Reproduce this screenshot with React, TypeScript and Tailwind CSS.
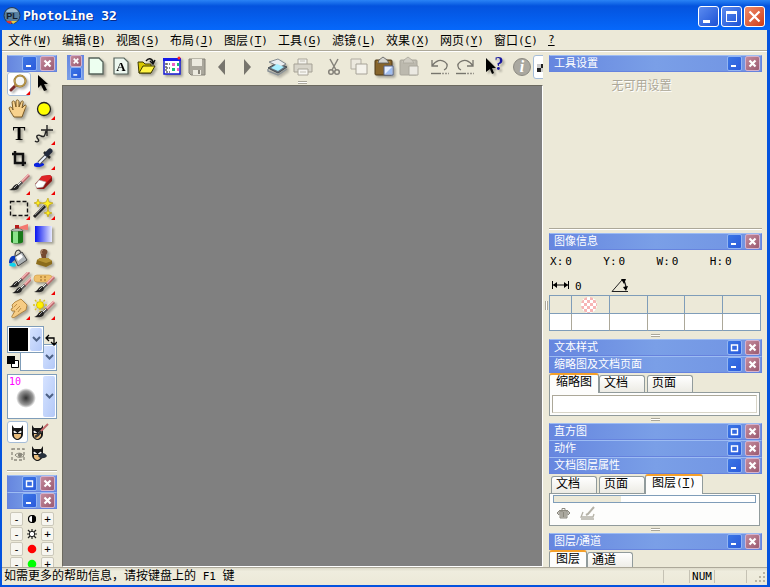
import { useState, type ReactNode } from "react";
import { clsx } from "clsx";

const menus = [
  ["文件", "W"],
  ["编辑", "B"],
  ["视图", "S"],
  ["布局", "J"],
  ["图层", "T"],
  ["工具", "G"],
  ["滤镜", "L"],
  ["效果", "X"],
  ["网页", "Y"],
  ["窗口", "C"],
];

const Latin = ({ children }: { children: ReactNode }) => (
  <span className="font-['DejaVu_Sans_Mono',monospace] text-[11px]">{children}</span>
);

const Icon = ({ children, flat }: { children: ReactNode; flat?: boolean }) => (
  <svg
    viewBox="0 0 24 24"
    aria-hidden="true"
    className={clsx("size-6 shrink-0", !flat && "drop-shadow-[2px_2px_1px_rgba(0,0,0,0.3)]")}
  >
    {children}
  </svg>
);

/* small brush reused by several tools */
const Brush = () => (
  <>
    <path d="M22 3L14 11" stroke="#b9676a" strokeWidth="3" />
    <path d="M22 2L14 10" stroke="#f5b5b5" strokeWidth="1.500" />
    <path d="M15 10L11 14" stroke="#555" strokeWidth="3" />
    <path d="M14 10L10 14" stroke="#eee" strokeWidth="1" />
    <path d="M12 14C12 18 8 19 2 18C6 17 6 13 10 12Z" fill="#222" />
    <path d="M10 13L7 16" stroke="#aaa" strokeWidth="1" />
  </>
);

const Mask = () => (
  <>
    <path d="M6 5L8 8H15L17 5V14C17 18 13 20 11.500 20C10 20 6 18 6 14Z" fill="#171717" />
    <path d="M8 14H15V16C14 18 12 19 11.500 19C10 19 8 17 8 16Z" fill="#e9bd7c" />
    <path d="M8 11L10.500 12.500H8ZM15 11L12.500 12.500H15Z" fill="#fff" stroke="#fff" strokeWidth="0.800" />
  </>
);

type Tool = { name: string; menu?: boolean; flat?: boolean; art: ReactNode };

const tools: Tool[] = [
  {
    name: "缩放",
    menu: true,
    art: (
      <>
        <path d="M9 13L4 18" stroke="#7b2b2b" strokeWidth="3" strokeLinecap="round" />
        <path d="M10 12L8 14" stroke="#d8b860" strokeWidth="2" />
        <circle cx="13" cy="9" r="5.500" fill="#f4f6f6" stroke="#8d6a22" strokeWidth="2" />
        <circle cx="13" cy="9" r="5.500" fill="none" stroke="#d9b765" strokeWidth="0.800" />
      </>
    ),
  },
  {
    name: "选择",
    art: <path d="M6 3V16L9 13L12 19L15 18L12 12H16Z" fill="#000" />,
  },
  {
    name: "移动",
    art: (
      <path
        d="M7 20C5 17 3 14 2 11C3 9 5 10 6 13L5 5C6 3 8 4 8 6L9 10L9 4C10 2 12 3 12 5V10L14 5C15 3 17 4 16 6L15 11L18 8C20 8 19 10 18 12L15 20Z"
        fill="#f8d28d"
        stroke="#7a5a25"
        strokeWidth="1"
      />
    ),
  },
  {
    name: "椭圆",
    menu: true,
    art: <circle cx="12" cy="12" r="6.500" fill="#ff0" stroke="#222" strokeWidth="1.300" />,
  },
  {
    name: "文本",
    art: (
      <text x="12" y="18" textAnchor="middle" fontSize="19" fontWeight="700" className="font-['Liberation_Serif',serif]">
        T
      </text>
    ),
  },
  {
    name: "路径",
    menu: true,
    art: (
      <path
        d="M15 3V14M9 8H21M3 19C5 21 8 19 6 17C3 14 6 12 9 14C13 16 13 12 14 9"
        fill="none"
        stroke="#222"
        strokeWidth="1.400"
      />
    ),
  },
  {
    name: "裁剪",
    art: <path d="M8 4V16H19M5 7H16V19" fill="none" stroke="#111" strokeWidth="2.500" />,
  },
  {
    name: "吸管",
    menu: true,
    art: (
      <>
        <path d="M2 17C6 14 13 16 12 18C10 20 4 21 2 19Z" fill="#0822df" />
        <path d="M15 8L7 16" stroke="#555" strokeWidth="4" />
        <path d="M15 8L7 16" stroke="#eef5ff" strokeWidth="2" />
        <path d="M12 5L18 11" stroke="#222" strokeWidth="2.500" />
        <path d="M15 7L18 4" stroke="#222a3c" strokeWidth="5" strokeLinecap="round" />
      </>
    ),
  },
  { name: "画笔", menu: true, art: <Brush /> },
  {
    name: "橡皮擦",
    menu: true,
    art: (
      <>
        <path d="M3 12L10 4L18 3L20 5V9L12 17H5Z" fill="#8e1515" />
        <path d="M7 8L10 4L18 3L20 5L14 11Z" fill="#df2527" />
        <path d="M3 13L7 8L14 10L11 15L5 16Z" fill="#fff" stroke="#aaa" strokeWidth="0.600" />
      </>
    ),
  },
  {
    name: "选框",
    menu: true,
    art: (
      <rect x="3.500" y="4.500" width="17" height="14" fill="none" stroke="#111" strokeWidth="1.400" strokeDasharray="4 2" />
    ),
  },
  {
    name: "魔棒",
    menu: true,
    art: (
      <>
        <path d="M2 20L13 9" stroke="#222" strokeWidth="3" />
        <path d="M3 18L12 9" stroke="#999" strokeWidth="0.800" />
        <path
          d="M6 2L7 5L10 6L7 7L6 10L5 7L2 6L5 5ZM16 1L17 5L21 6L17 8L16 12L14 8L10 6L14 5ZM16 12L17 15L20 16L17 17L16 20L15 17L12 16L15 15Z"
          fill="#ffee20"
          stroke="#b39600"
          strokeWidth="0.600"
        />
      </>
    ),
  },
  {
    name: "喷枪",
    art: (
      <>
        <path d="M12 5L21 2V8L12 7Z" fill="#f4786f" />
        <path d="M8 3H12V7H8Z" fill="#b71b1b" />
        <path d="M4 9C4 6 16 6 16 9V20C15 22 5 22 4 20Z" fill="#187a18" />
        <path d="M6 9H11V21H6Z" fill="#8be28b" />
        <path d="M4 9C4 6 16 6 16 9Z" fill="#d9ddd9" stroke="#555" strokeWidth="0.700" />
      </>
    ),
  },
  {
    name: "渐变",
    art: (
      <>
        <defs>
          <linearGradient id="ramp">
            <stop offset="0" stopColor="#0714f0" />
            <stop offset="1" stopColor="#e8eaff" />
          </linearGradient>
        </defs>
        <rect x="3" y="4" width="17" height="16" fill="url(#ramp)" />
      </>
    ),
  },
  {
    name: "填充",
    art: (
      <>
        <path d="M8 9C8 2 14 1 14 8" fill="none" stroke="#444" strokeWidth="1.200" />
        <path d="M7 10L15 5L20 13L11 19Z" fill="#aeb4b7" stroke="#444" strokeWidth="1" />
        <path d="M9 10L14 7L16 10L11 14Z" fill="#fff" />
        <path d="M8 9C4 8 2 12 2 16C5 18 5 14 8 13Z" fill="#0838bd" />
        <path d="M2 18C4 15 9 15 9 19C8 20 3 20 2 18Z" fill="#10d3ec" />
      </>
    ),
  },
  {
    name: "图章",
    art: (
      <>
        <path d="M9 8C7 3 10 2 12 2C15 2 17 4 14 8V12H10Z" fill="#754a31" />
        <path d="M11 3C9 3 9 5 10 7" stroke="#b99073" fill="none" />
        <path d="M5 13L8 11H16L20 14V17L14 20L4 17Z" fill="#8b6c1c" />
        <path d="M5 13L8 11H16L20 14L14 16Z" fill="#b59334" />
      </>
    ),
  },
  {
    name: "复制画笔",
    art: (
      <>
        <g transform="translate(0 -3)">
          <Brush />
        </g>
        <g transform="translate(3 3)">
          <Brush />
        </g>
      </>
    ),
  },
  {
    name: "修复画笔",
    menu: true,
    art: (
      <>
        <rect x="2" y="3" width="18" height="7" rx="3" fill="#efc06a" stroke="#cf9a45" strokeWidth="0.600" />
        <path d="M8 5H10M12 5H14M8 8H10M12 8H14" stroke="#9f6a22" />
        <g transform="translate(0 2)">
          <Brush />
        </g>
      </>
    ),
  },
  {
    name: "涂抹",
    menu: true,
    art: (
      <>
        <path
          d="M8 5L14 2L20 8L19 13L14 16L8 20C6 21 4 21 5 19L8 14L5 14L4 12L6 11L5 8Z"
          fill="#f6cc84"
          stroke="#a6762f"
          strokeWidth="0.800"
        />
        <path d="M10 7L7 10M13 9L9 13M14 11L11 15" stroke="#a6762f" strokeWidth="0.700" />
      </>
    ),
  },
  {
    name: "加亮",
    menu: true,
    art: (
      <>
        <path d="M8 2V15M1 8H15M3 3L13 13M3 13L13 3" stroke="#d9c21a" strokeWidth="1.400" strokeDasharray="2 1" />
        <circle cx="8" cy="8" r="3.500" fill="#fff000" stroke="#c9aa00" strokeWidth="0.600" />
        <g transform="translate(0 2)">
          <Brush />
        </g>
      </>
    ),
  },
];

const Printer = () => (
  <>
    <path d="M7 4H16V10H7Z" fill="#f4f3ee" stroke="#aaa69a" />
    <path d="M3 9H21V17H3Z" fill="#d8d5ca" stroke="#a5a195" />
    <path d="M7 14H17V20H7Z" fill="#f7f6f2" stroke="#aaa69a" />
    <path d="M9 6H14M9 17H15" stroke="#c2bfb4" />
  </>
);

const Clipboard = ({ dim }: { dim?: boolean }) => (
  <>
    <rect x="3" y="5" width="17" height="15" rx="1" fill={dim ? "#bcb9ae" : "#87652c"} stroke={dim ? "#aaa79c" : "#4d3916"} />
    <path d="M5 7H18" stroke={dim ? "#c8c5ba" : "#a88341"} strokeWidth="2" />
    <path d="M7 5L11 2L15 5L17 8H6Z" fill={dim ? "#cfccc2" : "#d5d5d0"} stroke={dim ? "#aaa79c" : "#575757"} strokeWidth="0.800" />
    <path d="M12 11H21V20H12Z" fill={dim ? "#ebe9e2" : "#e6efff"} stroke={dim ? "#aaa79c" : "#526491"} />
    {!dim && <path d="M13 19L20 12V19Z" fill="#9fbdf0" />}
  </>
);

const Undo = () => (
  <>
    <path d="M4 5V11H10M4 11C8 5 13 4 17 7C20 9 20 13 16 15" fill="none" stroke="#77756d" strokeWidth="1.300" />
    <path d="M3 18.500H13" stroke="#77756d" strokeWidth="1.400" />
    <path d="M14 18.500H21" stroke="#99968c" strokeWidth="1.400" strokeDasharray="2 1" />
  </>
);

const toolbarGroups: Tool[][] = [
  [
    {
      name: "新建",
      art: <path d="M4 3H14L18 7V19H4Z" fill="#edfff0" stroke="#55635a" strokeWidth="1.300" />,
    },
    {
      name: "新建文本",
      art: (
        <>
          <path d="M4 3H14L18 7V19H4Z" fill="#edf8f0" stroke="#55635a" strokeWidth="1.200" />
          <text x="11" y="16" textAnchor="middle" fontSize="13" fontWeight="700" className="font-['Liberation_Serif',serif]">
            A
          </text>
        </>
      ),
    },
    {
      name: "打开",
      art: (
        <>
          <path d="M3 7H8L10 9H16V18H4Z" fill="#d9c900" stroke="#3d3900" />
          <path d="M4 18L8 11H20L16 18Z" fill="#fff344" stroke="#3d3900" />
          <path d="M11 6C14 2 18 4 18 8M15 6L18 9L20 5" fill="none" stroke="#111" strokeWidth="1.400" />
        </>
      ),
    },
    {
      name: "浏览",
      art: (
        <>
          <path d="M4 4H20V19H4Z" fill="#fff" stroke="#1519d4" strokeWidth="1.500" />
          <path d="M3 3H21V6H3Z" fill="#1519e8" />
          <path d="M6 8V17M6 9H10M6 13H10M6 17H10" stroke="#666" strokeWidth="1.500" strokeDasharray="2 1" />
          <path d="M12 8H15V11H12ZM17 13H19V16H17Z" fill="#ee62c7" />
          <path d="M17 8H19V11H17ZM12 13H15V16H12Z" fill="#18bd78" />
          <circle cx="19" cy="3" r="1.500" fill="#f22" />
        </>
      ),
    },
    {
      name: "保存",
      flat: true,
      art: (
        <>
          <path d="M4 4H20V20H6L4 18Z" fill="#aaa79c" stroke="#858278" />
          <path d="M7 4H17V11H7ZM8 15H16V20H8Z" fill="#eceadf" />
          <path d="M13 15H15V19H13Z" fill="#858278" />
        </>
      ),
    },
    { name: "后退", flat: true, art: <path d="M15 4V20L8 12Z" fill="#77756d" /> },
    { name: "前进", flat: true, art: <path d="M9 4V20L16 12Z" fill="#77756d" /> },
  ],
  [
    {
      name: "扫描",
      art: (
        <>
          <path d="M2 13L11 8L21 12L12 18Z" fill="#67727c" stroke="#444c52" />
          <path d="M3 7L12 4L20 9L14 12Z" fill="#e9edf0" stroke="#69747b" strokeWidth="0.800" />
          <path d="M5 13L11 9L18 12L12 16Z" fill="#a8efff" />
          <path d="M2 14V16L12 20L21 14" fill="none" stroke="#8a9297" strokeWidth="1.500" />
        </>
      ),
    },
    { name: "打印", flat: true, art: <Printer /> },
  ],
  [
    {
      name: "剪切",
      flat: true,
      art: (
        <>
          <path d="M8 4L14 15M16 4L10 15" stroke="#85827a" strokeWidth="1.500" />
          <circle cx="9" cy="17" r="2.300" fill="none" stroke="#85827a" strokeWidth="1.500" />
          <circle cx="15" cy="17" r="2.300" fill="none" stroke="#85827a" strokeWidth="1.500" />
        </>
      ),
    },
    {
      name: "复制",
      flat: true,
      art: (
        <>
          <path d="M4 4H14V14H4Z" fill="#ece9df" stroke="#b1ada2" />
          <path d="M9 9H20V19H9Z" fill="#f4f2eb" stroke="#a6a297" />
        </>
      ),
    },
    { name: "粘贴", art: <Clipboard /> },
    { name: "粘贴为", flat: true, art: <Clipboard dim /> },
  ],
  [
    { name: "撤销", flat: true, art: <Undo /> },
    {
      name: "重做",
      flat: true,
      art: (
        <>
          <path d="M20 5V11H14M20 11C16 5 11 4 7 7C4 9 4 13 8 15" fill="none" stroke="#77756d" strokeWidth="1.300" />
          <path d="M3 18.500H13" stroke="#77756d" strokeWidth="1.400" />
          <path d="M14 18.500H21" stroke="#99968c" strokeWidth="1.400" strokeDasharray="2 1" />
        </>
      ),
    },
  ],
  [
    {
      name: "这是什么",
      art: (
        <>
          <path d="M2 3V17L6 14L8 19L10 18L8 13H12Z" fill="#000" />
          <text x="15" y="15" textAnchor="middle" fontSize="18" fontWeight="700" fill="#17179c" className="font-['Liberation_Serif',serif]">
            ?
          </text>
        </>
      ),
    },
    {
      name: "信息",
      flat: true,
      art: (
        <>
          <circle cx="13" cy="12" r="8.500" fill="#aaa8a0" stroke="#8c8a82" />
          <text x="13" y="17" textAnchor="middle" fontSize="16" fontWeight="700" fontStyle="italic" fill="#fff" className="font-['Liberation_Serif',serif]">
            i
          </text>
        </>
      ),
    },
  ],
];

type Glyph = "min" | "max" | "close";

const labels = { min: "最小化", max: "还原", close: "关闭" };

/* caption button in a docked panel */
const CaptionButton = ({ glyph, small }: { glyph: Glyph; small?: boolean }) => (
  <button
    aria-label={labels[glyph]}
    className={clsx(
      "flex shrink-0 items-center justify-center rounded-[2px] border",
      small ? "size-3" : "size-[15px]",
      glyph === "close"
        ? "border-[#d3b3cf] bg-linear-to-br from-[#c48a9b] to-[#9b5b72]"
        : "border-[#93b5f2] bg-linear-to-br from-[#3c76e4] to-[#2c5bdc]",
    )}
  >
    <svg viewBox="0 0 13 13" className={small ? "size-[10px]" : "size-[13px]"} fill="none" stroke="#fff">
      {glyph === "close" && <path d="M3.500 3.500L9.500 9.500M9.500 3.500L3.500 9.500" strokeWidth="2.200" />}
      {glyph === "min" && <path d="M3 9H8" strokeWidth="2" />}
      {glyph === "max" && <path d="M3.500 9.500V4H9.500V9.500ZM3 4H10" strokeWidth="1.400" />}
    </svg>
  </button>
);

const PanelTitle = ({ title, glyph = "min" }: { title?: string; glyph?: Glyph }) => (
  <header className="flex h-[17px] shrink-0 items-center gap-[3px] border border-[#6683de] border-t-[#9dbcf3] bg-linear-to-r from-[#6686df] via-[#7a9fe7] to-[#7093e3] pr-px pl-1">
    <h2 className="grow truncate text-[11px] leading-[15px] text-white">{title}</h2>
    <CaptionButton glyph={glyph} />
    <CaptionButton glyph="close" />
  </header>
);

const Grip = () => (
  <div className="mx-auto h-[3px] w-[9px] shrink-0 border-y border-[#aaa79a] bg-white" />
);

const Tabs = ({ items, initial, className }: { items: string[]; initial: number; className?: string }) => {
  const [active, setActive] = useState(initial);
  return (
    <div role="tablist" className={clsx("flex h-[19px] shrink-0 items-end", className)}>
      {items.map((item, i) => (
        <button
          key={item}
          role="tab"
          aria-selected={i === active}
          onClick={() => setActive(i)}
          className={clsx(
            "flex items-start rounded-t-[3px] border border-b-0 border-[#919b9c] text-xs leading-[14px]",
            i === active
              ? "z-10 -mb-px -ml-[2px] h-5 border-t-2 border-t-[#f5a02a] bg-[#fdfdfc] px-[6px] first:ml-0"
              : "mr-[2px] h-[17px] w-[46px] bg-linear-to-b from-white to-[#ecebe4] px-1",
          )}
        >
          {item.endsWith("(T)") ? (
            <>
              {item.slice(0, -3)}
              <Latin>
                (<u>T</u>)
              </Latin>
            </>
          ) : (
            item
          )}
        </button>
      ))}
    </div>
  );
};

const Chevron = ({ label }: { label: string }) => (
  <button
    aria-label={label}
    className="flex w-3 shrink-0 items-center justify-center rounded-[2px] bg-linear-to-br from-[#d6e3ff] to-[#b3c8f7]"
  >
    <svg viewBox="0 0 9 7" className="h-[7px] w-[9px]" fill="none" stroke="#4d6185" strokeWidth="2">
      <path d="M1 1L4.500 4.500L8 1" />
    </svg>
  </button>
);

const Toolbox = () => {
  const [tool, setTool] = useState("缩放");
  return (
    <div className="grid grid-cols-2 gap-y-px">
      {tools.map(({ name, menu, art }) => (
        <button
          key={name}
          aria-label={name}
          onClick={() => setTool(name)}
          className={clsx("relative size-6 rounded-[3px]", tool === name && "bg-white outline -outline-offset-1 outline-[#a5bdd8]")}
        >
          <Icon>{art}</Icon>
          {menu && (
            <svg viewBox="0 0 4 4" className="absolute right-px bottom-px size-1">
              <path d="M4 0V4H0Z" fill="#e00" />
            </svg>
          )}
        </button>
      ))}
    </div>
  );
};

const ColorPicker = () => (
  <div className="mt-[5px] flex shrink-0 flex-col">
    <div className="z-10 flex items-center gap-[1px]">
      <div className="flex h-[27px] w-[37px] gap-[2px] border border-[#7f9db9] bg-white p-px">
        <div className="grow bg-black" />
        <Chevron label="前景色" />
      </div>
      <svg viewBox="0 0 12 12" className="size-3" fill="none" stroke="#000" strokeWidth="1.300">
        <path d="M1 4H9V11M4 1L1 4L4 7M6 8L9 11L12 8" />
      </svg>
    </div>
    <div className="-mt-[9px] flex items-end gap-[1px]">
      <svg viewBox="0 0 12 12" className="mb-[3px] size-3">
        <path d="M4.500 4.500H11.500V11.500H4.500Z" fill="#fff" stroke="#000" />
        <path d="M0 0H8V8H0Z" />
      </svg>
      <div className="flex h-[27px] w-[37px] justify-end border border-[#7f9db9] bg-white p-px">
        <Chevron label="背景色" />
      </div>
    </div>
  </div>
);

const BrushPreview = () => (
  <div className="mt-[3px] flex h-[45px] shrink-0 border border-[#7f9db9] bg-white p-px">
    <div className="flex grow flex-col">
      <span className="font-['DejaVu_Sans_Mono',monospace] text-[10px] leading-3 text-[#f0f]">10</span>
      <div className="mx-auto size-5 rounded-full bg-radial from-[#333] via-[#999] to-white to-70%" />
    </div>
    <Chevron label="画笔" />
  </div>
);

const MaskButtons = () => (
  <div className="mt-[2px] grid w-[42px] shrink-0 grid-cols-2">
    <button aria-label="蒙版" className="flex h-[22px] items-center justify-center rounded-[3px] border border-[#a5bdd8] bg-white">
      <svg viewBox="3 3 18 18" className="size-[18px]">
        <Mask />
      </svg>
    </button>
    <button aria-label="编辑蒙版" className="flex h-[22px] items-center justify-center">
      <svg viewBox="3 3 20 18" className="h-[18px] w-5">
        <Mask />
        <path d="M22 4L14 12" stroke="#c2686a" strokeWidth="2" />
        <path d="M15 11L12 15L9 17" stroke="#333" strokeWidth="2.500" />
      </svg>
    </button>
    <button aria-label="选区" className="flex h-[22px] items-center justify-center">
      <svg viewBox="0 0 16 16" className="size-4" fill="none" stroke="#8b887c" strokeWidth="1.300">
        <path d="M2 3H14V14H2Z" strokeDasharray="3 2" />
        <path d="M5 9C8 6 12 7 14 10C11 12 7 12 5 9" strokeWidth="1" />
        <circle cx="10" cy="9" r="1.500" fill="#8b887c" />
      </svg>
    </button>
    <button aria-label="显示蒙版" className="flex h-[22px] items-center justify-center">
      <svg viewBox="3 4 20 18" className="h-[18px] w-5">
        <Mask />
        <path d="M12 15C14 11 19 11 21 15C19 18 14 18 12 15" fill="#26303b" />
      </svg>
    </button>
  </div>
);

const stepClass =
  "flex h-[14px] w-[13px] items-center justify-center rounded-[2px] border border-[#cbc8ba] bg-[#f7f6f0] font-['DejaVu_Sans_Mono',monospace] text-[11px] leading-none";

const adjustments = [
  {
    name: "对比度",
    art: (
      <>
        <circle cx="5" cy="5" r="3.500" fill="#fff" stroke="#000" strokeWidth="1.200" />
        <path d="M5 1A4 4 0 0 1 5 9Z" />
      </>
    ),
  },
  {
    name: "亮度",
    art: (
      <>
        <path d="M5 0V10M0 5H10M1 1L9 9M9 1L1 9" stroke="#222" strokeWidth="1.200" />
        <circle cx="5" cy="5" r="2.700" fill="#fff" stroke="#222" />
      </>
    ),
  },
  { name: "红", art: <circle cx="5" cy="5" r="4.300" fill="#f00" /> },
  { name: "绿", art: <circle cx="5" cy="5" r="4.300" fill="#0f0" /> },
];

const LeftDock = () => (
  <aside className="flex w-[60px] shrink-0 flex-col overflow-hidden pt-[3px] pr-[5px] pl-[5px]">
    <PanelTitle />
    <Toolbox />
    <ColorPicker />
    <BrushPreview />
    <MaskButtons />
    <div className="mt-[5px] mb-[3px] h-[2px] shrink-0 border-t border-[#aca899] bg-white" />
    <PanelTitle glyph="max" />
    <PanelTitle />
    <div className="mt-[3px] flex flex-col gap-px pr-[3px] pl-[3px]">
      {adjustments.map(({ name, art }) => (
        <div key={name} className="flex shrink-0 items-center justify-between">
          <button aria-label={`${name} -`} className={stepClass}>-</button>
          <svg viewBox="0 0 10 10" className="size-[10px]">
            {art}
          </svg>
          <button aria-label={`${name} +`} className={stepClass}>+</button>
        </div>
      ))}
    </div>
  </aside>
);

const Toolbar = () => (
  <div className="flex h-[29px] shrink-0 items-start overflow-hidden pt-[3px] pl-[5px]">
    <div className="flex h-[25px] w-[17px] shrink-0 flex-col items-center bg-linear-to-b from-[#6686df] to-[#7a9fe7]">
      <CaptionButton glyph="close" small />
      <CaptionButton glyph="min" small />
    </div>
    <div className="flex shrink-0 gap-[6px]">
      {toolbarGroups.map((group) => (
        <div key={group[0].name} className="flex">
          {group.map(({ name, flat, art }) => (
            <button key={name} aria-label={name} className="flex w-[25px] justify-center">
              <Icon flat={flat}>{art}</Icon>
            </button>
          ))}
        </div>
      ))}
    </div>
    <button aria-label="透明网格" className="h-6 w-6 shrink-0 rounded-[3px] border border-[#a5bdd8] bg-white">
      <svg viewBox="0 0 16 16" className="ml-[3px] size-4">
        <path d="M0 9H4V13H0ZM4 5H8V9H4Z" fill="#222" />
        <path d="M4 9H8V13H4ZM0 5H4V9H0Z" fill="#ccc" />
      </svg>
    </button>
  </div>
);

const InfoPanel = () => (
  <section>
    <PanelTitle title="图像信息" />
    <div className="grid h-6 grid-cols-4 items-center">
      {["X", "Y", "W", "H"].map((axis) => (
        <span key={axis} className="flex gap-[2px] pl-px">
          <Latin>{axis}:</Latin>
          <Latin>0</Latin>
        </span>
      ))}
    </div>
    <div className="flex h-[21px] items-center">
      <svg viewBox="0 0 20 10" className="ml-[2px] h-[10px] w-5" fill="none" stroke="#000">
        <path d="M1.500 1V9M17.500 1V9M2 5H17" />
        <path d="M2 5L6 2V8ZM17 5L13 2V8Z" fill="#000" stroke="none" />
      </svg>
      <span className="ml-1 w-9">
        <Latin>0</Latin>
      </span>
      <svg viewBox="0 0 18 16" className="size-[18px]" fill="none" stroke="#222">
        <path d="M1 14.500H17M1 14.500L11 3" />
        <path d="M12 3C14 5 15 8 15 12" strokeWidth="1.300" />
        <path d="M10 2L15 2L13 7ZM12 10L17 9L15 14Z" fill="#000" stroke="none" />
      </svg>
    </div>
    <div className="pr-px">
      <table aria-label="颜色值" className="w-full table-fixed border-separate border-spacing-0 border-t border-l border-[#7f9db9]">
        <colgroup>
          <col className="w-[22px]" />
          <col span={5} />
        </colgroup>
        <tbody>
          <tr>
            {[0, 1, 2, 3, 4, 5].map((i) => (
              <td key={i} className="h-[18px] border-r border-b border-[#7f9db9] p-0">
                {i === 1 && (
                  <div className="ml-[9px] size-4 rounded-full bg-[repeating-conic-gradient(#f7b5b5_0_25%,#fff_0_50%)] bg-size-[6px_6px]" />
                )}
              </td>
            ))}
          </tr>
          <tr className="bg-white">
            {[0, 1, 2, 3, 4, 5].map((i) => (
              <td key={i} className="h-[17px] border-r border-b border-r-[#aca899] border-b-[#7f9db9] p-0 last:border-r-[#7f9db9]" />
            ))}
          </tr>
        </tbody>
      </table>
    </div>
  </section>
);

const RightDock = () => (
  <aside className="flex w-[224px] shrink-0 overflow-hidden">
    <div className="flex w-[6px] shrink-0 items-center justify-center">
      <div className="-mt-2 h-[9px] w-[3px] border-x border-[#aaa79a] bg-white" />
    </div>
    <div className="flex w-[213px] flex-col pt-[3px]">
      <PanelTitle title="工具设置" />
      <p className="h-[156px] shrink-0 pt-[5px] pr-7 text-center text-xs leading-[18px] text-[#aca899] [text-shadow:1px_1px_#fff]">
        无可用设置
      </p>
      <div className="mb-[3px] h-[2px] shrink-0 border-t border-[#aca899] bg-white" />
      <InfoPanel />
      <div className="flex h-2 shrink-0 items-center">
        <Grip />
      </div>
      <PanelTitle title="文本样式" glyph="max" />
      <PanelTitle title="缩略图及文档页面" />
      <Tabs items={["缩略图", "文档", "页面"]} initial={0} />
      <div className="mr-[2px] h-6 shrink-0 border border-[#919b9c] bg-[#fdfdfc] p-[2px]">
        <div className="h-full border border-[#d8d5c8] border-t-[#aca899] border-l-[#aca899] bg-white" />
      </div>
      <div className="flex h-[7px] shrink-0 items-center">
        <Grip />
      </div>
      <PanelTitle title="直方图" glyph="max" />
      <PanelTitle title="动作" glyph="max" />
      <PanelTitle title="文档图层属性" />
      <Tabs items={["文档", "页面", "图层(T)"]} initial={2} className="pl-[2px]" />
      <div className="mr-[2px] h-[33px] shrink-0 border border-[#919b9c] bg-[#fdfdfc] px-[3px] pt-px">
        <div className="h-2 border border-[#7f9db9] bg-white">
          <div className="h-full w-1/3 bg-[#ece9d8]" />
        </div>
        <div className="flex gap-[9px] pt-[3px] pl-1">
          <button aria-label="删除">
            <svg viewBox="0 0 14 14" className="size-[14px]" fill="none" stroke="#8b887e">
              <path d="M3 5H10V12H3Z" fill="#c9c7bf" />
              <path d="M2 4.500H11M5 4V2.500H8V4M5 5V11M6.500 6V11M8 6V11M0 7L2 5V9ZM13 7L11 5V9Z" />
            </svg>
          </button>
          <button aria-label="编辑">
            <svg viewBox="0 0 16 14" className="h-[14px] w-4" fill="none" stroke="#b4b1a6">
              <path d="M3 6L1 11H13L14 8M1 13H14" strokeWidth="1.300" />
              <path d="M14 1L8 8L6 9" strokeWidth="2" />
            </svg>
          </button>
        </div>
      </div>
      <div className="flex h-[7px] shrink-0 items-center">
        <Grip />
      </div>
      <PanelTitle title="图层/通道" />
      <Tabs items={["图层", "通道"]} initial={0} />
    </div>
  </aside>
);

const windowButton = "flex size-[21px] items-center justify-center rounded-[3px] border border-white";

const TitleBar = () => (
  <header className="flex h-[30px] shrink-0 items-center gap-[2px] bg-linear-to-b from-[#2a83f5] via-[#0453de] via-20% to-[#0668fb] pt-[2px] pr-[5px] pl-[3px]">
    <svg viewBox="0 0 18 18" className="size-[18px]" aria-hidden="true">
      <circle cx="9" cy="8.500" r="8" fill="#587f9f" stroke="#283b52" />
      <path d="M3 5C5 0 13 0 15 5" fill="#9ebbd0" />
      <path d="M3 14H9L8 17L5 16Z" fill="#d33" />
      <path d="M8 14H14L10 17Z" fill="#e5cc40" />
      <text x="9" y="12" textAnchor="middle" fontSize="9" fontWeight="700" fill="#14202e" className="font-['Liberation_Sans',sans-serif]">
        PL
      </text>
    </svg>
    <h1 className="grow font-['DejaVu_Sans_Mono',monospace] text-[13px] font-bold text-white [text-shadow:1px_1px_#0a2a86]">
      PhotoLine 32
    </h1>
    <button aria-label="最小化" className={clsx(windowButton, "bg-linear-to-br from-[#5b8bf0] to-[#1c50d4]")}>
      <svg viewBox="0 0 19 19" className="size-[19px]">
        <path d="M4 13H11V16H4Z" fill="#fff" />
      </svg>
    </button>
    <button aria-label="最大化" className={clsx(windowButton, "bg-linear-to-br from-[#5b8bf0] to-[#1c50d4]")}>
      <svg viewBox="0 0 19 19" className="size-[19px]">
        <path d="M4 4H15V15H4ZM5 7V14H14V7Z" fill="#fff" fillRule="evenodd" />
      </svg>
    </button>
    <button aria-label="关闭" className={clsx(windowButton, "bg-linear-to-br from-[#ee8a68] to-[#cf3a12]")}>
      <svg viewBox="0 0 19 19" className="size-[19px]" stroke="#fff" strokeWidth="2.200">
        <path d="M4.500 4.500L14.500 14.500M14.500 4.500L4.500 14.500" />
      </svg>
    </button>
  </header>
);

const MenuBar = () => (
  <nav className="flex h-[22px] shrink-0 items-center border-b border-white pl-px shadow-[inset_0_-1px_#aca899]">
    {menus.map(([label, key]) => (
      <button key={key} className="flex h-5 w-[54px] items-center px-[5px] text-xs leading-5">
        {label}
        <Latin>
          (<u className="underline-offset-2">{key}</u>)
        </Latin>
      </button>
    ))}
    <button className="flex h-5 items-center px-[5px]">
      <Latin>
        <u className="underline-offset-2">?</u>
      </Latin>
    </button>
  </nav>
);

const StatusBar = () => (
  <footer className="flex h-[18px] shrink-0 items-center border-t border-[#aca899] bg-linear-to-b from-[#dedbcb] via-[#efedde] via-20% to-[#ece9d8] text-xs leading-4">
    <p className="grow pl-[2px] whitespace-pre">
      如需更多的帮助信息，请按键盘上的<Latin> F1 </Latin>键
    </p>
    <div className="h-[13px] w-[26px] border-l border-[#c5c2b4]" />
    <div className="flex h-[13px] w-[26px] items-center justify-center border-x border-[#c5c2b4]">
      <Latin>NUM</Latin>
    </div>
    <div className="h-[13px] w-8 border-r border-[#c5c2b4]" />
    <svg viewBox="0 0 20 16" className="h-4 w-5" fill="#b8b4a2">
      <path d="M16 3H18V5H16ZM12 7H14V9H12ZM16 7H18V9H16ZM8 11H10V13H8ZM12 11H14V13H12ZM16 11H18V13H16Z" />
    </svg>
  </footer>
);

const App = () => (
  <div className="flex h-screen flex-col overflow-hidden bg-[#0453de] font-['Liberation_Sans','Noto_Sans_CJK_SC',sans-serif] text-black">
    <TitleBar />
    <div className="mr-[3px] mb-[2px] ml-[2px] flex min-h-0 grow flex-col bg-[#ece9d8]">
      <MenuBar />
      <div className="flex min-h-0 grow">
        <LeftDock />
        <div className="flex min-w-0 grow flex-col">
          <Toolbar />
          <div className="mb-px flex shrink-0 justify-center">
            <Grip />
          </div>
          <main className="grow border border-t-[#6b695f] border-r-white border-b-white border-l-[#6b695f] bg-[#808080]" />
        </div>
        <RightDock />
      </div>
      <StatusBar />
    </div>
  </div>
);

export default App;
